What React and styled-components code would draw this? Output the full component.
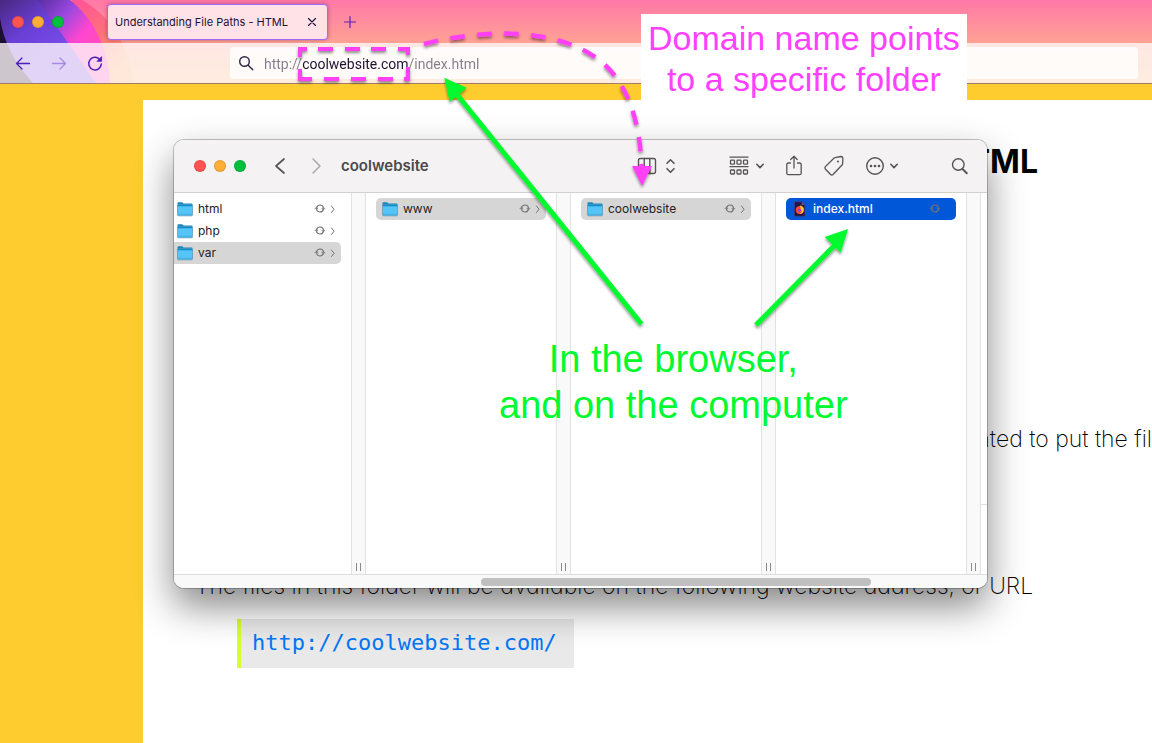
import React from "react";
import styled, { createGlobalStyle } from "styled-components";

const ui = `Inter, Roboto, "Liberation Sans", sans-serif`;

const GlobalStyle = createGlobalStyle`
  *, *::before, *::after { box-sizing: border-box; }
  body { margin: 0; font-family: ${ui}; }
  button { margin: 0; padding: 0; border: 0; background: none; color: inherit; font: inherit; cursor: pointer; }
  h1, p, ul { margin: 0; padding: 0; }
  ul { list-style: none; }
  svg { display: block; flex: none; }
`;

const Desktop = styled.div`
  position: relative;
  display: flex;
  flex-direction: column;
  min-height: 100vh;
  overflow: hidden;
  background: #ffcc2f;
`;

/* Browser chrome */

const Chrome = styled.header`
  position: relative;
  background: linear-gradient(#ff78a7, #ffa294 52%, #ffb880);
  border-bottom: 1px solid #a17c6c;
`;

const ThemeArt = styled.svg`
  position: absolute;
  left: 0;
  top: 0;
`;

const TabStrip = styled.div`
  position: relative;
  display: flex;
  align-items: center;
  height: 43px;
  padding-left: 12px;
`;

const Lights = styled.div`
  display: flex;
  gap: 8px;
`;

const Light = styled.button`
  width: 12px;
  height: 12px;
  border-radius: 50%;
  background: ${(p) => p.$color};
  box-shadow: inset 0 0 0 1px rgba(0, 0, 0, 0.12);
`;

const Tab = styled.div`
  display: flex;
  align-items: center;
  justify-content: space-between;
  width: 221px;
  height: 36px;
  margin-left: 43px;
  padding: 0 10px 0 7px;
  border: 1px solid #a268f6;
  border-radius: 4px;
  background: #ffe2e8;
  color: #1d1133;
  font-size: 11px;
  line-height: 16px;
  white-space: nowrap;
  box-shadow: 0 0 4px rgba(90, 30, 90, 0.45);
`;

const NewTab = styled.button`
  margin-left: 15px;
`;

const NavBar = styled.div`
  position: relative;
  display: flex;
  align-items: center;
  height: 40px;
  padding: 0 14px 0 14px;
  background: rgba(255, 251, 250, 0.78);
`;

const NavButtons = styled.div`
  display: flex;
  gap: 18px;
`;

const AddressBar = styled.label`
  flex: 1;
  display: flex;
  align-items: center;
  gap: 10px;
  height: 32px;
  margin-left: 126px;
  padding-left: 8px;
  border-radius: 4px;
  background: rgba(255, 255, 255, 0.8);
`;

/* The host name is darker than the rest of the address. */
const AddressInput = styled.input`
  flex: 1;
  min-width: 0;
  height: 24px;
  padding: 2px 0 0;
  border: 0;
  outline: 0;
  font-family: Roboto, ${ui};
  font-size: 14px;
  color: #837c8c;
  -webkit-text-fill-color: transparent;
  background: linear-gradient(90deg, #837c8c 38px, #1d1133 38px, #1d1133 144px, #837c8c 144px);
  -webkit-background-clip: text;
  background-clip: text;
`;

/* Web page behind the file window */

const Article = styled.main`
  flex: 1;
  margin: 16px 0 0 143px;
  padding: 38px 0 75px 52px;
  background: #fff;
  color: #000;
`;

const Title = styled.h1`
  padding-right: 114px;
  text-align: right;
  font-size: 32px;
  line-height: 48px;
  font-weight: 700;
`;

const Text = styled.p`
  margin-top: ${(p) => p.$before}px;
  font-size: 23px;
  line-height: 36px;
  font-weight: 200;
  font-feature-settings: "cv11";
  text-align: ${(p) => (p.$toEdge ? "right" : "left")};
  white-space: nowrap;
`;

const CodeBlock = styled.pre`
  width: fit-content;
  margin: 15px 0 0 42px;
  padding: 8px 17px 9px 11px;
  border-left: 4px solid #d7ff2f;
  background: #e9e9e9;
  font-family: "DejaVu Sans Mono", monospace;
  font-size: 22px;
  line-height: 32px;

  a { color: #0076f5; text-decoration: none; }
`;

/* File manager window */

const Finder = styled.section`
  position: absolute;
  left: 174px;
  top: 140px;
  display: flex;
  flex-direction: column;
  width: 813px;
  border-radius: 10px;
  overflow: hidden;
  background: #fff;
  color: #262626;
`;

const FinderShadow = styled.div`
  position: absolute;
  left: 174px;
  top: 140px;
  width: 813px;
  height: 448px;
  border-radius: 10px;
  box-shadow: 0 0 0 1px rgba(0, 0, 0, 0.22), 0 18px 38px rgba(0, 0, 0, 0.48);
`;

const Toolbar = styled.div`
  display: flex;
  align-items: center;
  height: 53px;
  padding: 0 18px 0 20px;
  border-bottom: 1px solid #d2d0d1;
  background: #f4f2f3;
  color: #565556;
`;

const History = styled.div`
  display: flex;
  gap: 16px;
  margin: 0 15px 0 24px;
`;

const FolderTitle = styled.strong`
  color: #4a494a;
  font-size: 15px;
  line-height: 20px;
  font-weight: 600;
`;

const Tools = styled.div`
  display: flex;
  align-items: center;
  gap: 20px;
  margin-left: auto;
`;

const Tool = styled.button`
  display: flex;
  align-items: center;
  justify-content: space-between;
  width: ${(p) => p.$width}px;
  margin-left: ${(p) => (p.$apart ? 32 : 0)}px;
`;

const Columns = styled.div`
  display: flex;
  height: 381px;
`;

const Column = styled.ul`
  width: ${(p) => (p.$first ? 177 : 190)}px;
  padding: ${(p) => (p.$first ? "5px 10px 0 0" : "5px 10px 0 10px")};
`;

const Row = styled.button`
  display: flex;
  align-items: center;
  width: 100%;
  height: 22px;
  padding: 0 5px 0 ${(p) => (p.$first ? 3 : 6)}px;
  border-radius: ${(p) => (p.$first ? "0 5px 5px 0" : "5px")};
  background: ${(p) => (p.$state === "active" ? "#0058d8" : p.$state === "open" ? "#d6d6d6" : "none")};
  color: ${(p) => (p.$state === "active" ? "#fff" : "#222")};
  font-size: 12px;
  font-weight: ${(p) => (p.$state === "active" ? 500 : 400)};
  text-align: left;
`;

const RowName = styled.span`
  flex: 1;
  margin-left: 5px;
  line-height: 16px;
`;

const RowMarks = styled.span`
  display: flex;
  align-items: center;
  gap: 4px;
  color: #747474;
`;

const Divider = styled.div`
  display: flex;
  align-items: flex-end;
  justify-content: center;
  gap: 3px;
  width: 15px;
  padding-bottom: 3px;
  border: solid #e2e2e2;
  border-width: 0 1px;
  background: #f9f9f9;

  &::before, &::after {
    content: "";
    width: 1px;
    height: 8px;
    background: #8a8a8a;
  }
`;

const Preview = styled.div`
  flex: 1;
  height: 312px;
  border-bottom: 1px solid #e2e2e2;
`;

const ScrollTrack = styled.div`
  height: 14px;
  padding: 3px 116px 3px 307px;
  border-top: 1px solid #dedede;
  background: #f9f9f9;
`;

const ScrollThumb = styled.div`
  height: 8px;
  border-radius: 4px;
  background: #c0c0c0;
`;

/* Annotations drawn over the windows */

const Marks = styled.svg`
  position: absolute;
  left: 0;
  top: 0;
  pointer-events: none;
`;

const Note = styled.p`
  position: absolute;
  left: ${(p) => p.$left}px;
  top: ${(p) => p.$top}px;
  padding: ${(p) => p.$pad || 0};
  background: ${(p) => p.$fill || "none"};
  color: ${(p) => p.$color};
  font-family: "Liberation Sans", Arial, sans-serif;
  font-size: ${(p) => p.$size}px;
  line-height: ${(p) => p.$line}px;
  text-align: center;
  white-space: nowrap;
`;

const Stroke = ({ w = 20, h = 20, sw = 1.5, color = "currentColor", children, ...rest }) => (
  <svg width={w} height={h} viewBox={`0 0 ${w} ${h}`} fill="none" stroke={color} strokeWidth={sw}
    strokeLinecap="round" strokeLinejoin="round" aria-hidden="true" {...rest}>
    {children}
  </svg>
);

const WindowLights = () => (
  <Lights>
    <Light $color="#ff5450" aria-label="Close" />
    <Light $color="#ffaf35" aria-label="Minimize" />
    <Light $color="#00bf3d" aria-label="Zoom" />
  </Lights>
);

const FolderIcon = () => (
  <svg width="16" height="16" viewBox="0 0 16 16" aria-hidden="true">
    <path d="M.5 3.2V2q0-.8.8-.8h4l1.2 1.2h8q1 0 1 1V5H.5z" fill="#1b86bd" />
    <rect x=".5" y="3.8" width="15" height="11" rx="1" fill="#55c4f6" stroke="#5792b0" strokeWidth=".7" />
    <path d="M.9 3.9h14.2v1.4H.9z" fill="#0d8dcc" />
    <path d="M1 13.3h14" stroke="#41b0e6" />
  </svg>
);

const FileIcon = () => (
  <svg width="16" height="16" viewBox="0 0 16 16" aria-hidden="true">
    <path d="M2.5.8h7.2l3.1 3.1v11.3H2.5z" fill="#241447" stroke="#5a3b70" strokeWidth=".6" />
    <path d="M9.7.8v3.1h3.1z" fill="#7b4b86" />
    <circle cx="7.8" cy="9" r="4" fill="#ff4a35" />
    <path d="M8.5 4.3c2.5 1 3.6 2.8 3.3 5.2-.4 2.3-2.3 3.6-4.3 3.4 2.2-.8 2.7-2.8 1.6-4.4-.8-1.1-1-2.4-.6-4.2z" fill="#ffc53a" />
    <circle cx="7.2" cy="9.2" r="1.5" fill="#8b46d9" />
  </svg>
);

const SyncIcon = () => (
  <Stroke w={12} h={12} sw={1.1}>
    <path d="M2.700 4.500A3.500 3.500 0 0 1 9.500 5M9.300 6.500A3.500 3.500 0 0 1 2.500 6" />
    <path d="M.900 5.800h3.200L2.500 4zM7.900 5.200h3.200L9.500 7z" fill="currentColor" strokeWidth=".3" />
  </Stroke>
);

const SmallChevron = () => (
  <Stroke w={6} h={12} sw={1}><path d="M1.500 3l2.500 3.300L1.500 9.500" /></Stroke>
);

const DownChevron = () => (
  <Stroke w={10} h={10} sw={1.6}><path d="M1.800 3.300L5 6.600l3.200-3.300" /></Stroke>
);

const Entry = ({ name, first, state }) => (
  <li>
    <Row $first={first} $state={state}>
      {state === "active" ? <FileIcon /> : <FolderIcon />}
      <RowName>{name}</RowName>
      <RowMarks>
        <SyncIcon />
        {state === "active" ? <Stroke w={6} h={12} /> : <SmallChevron />}
      </RowMarks>
    </Row>
  </li>
);

const BrowserChrome = () => (
  <Chrome>
    <ThemeArt width="160" height="83" viewBox="0 0 160 83" aria-hidden="true">
      <defs>
        <linearGradient id="outer" gradientUnits="userSpaceOnUse" x1="80" y1="0" x2="130" y2="60">
          <stop offset="0" stopColor="#ff4f92" /><stop offset=".5" stopColor="#ff6a74" /><stop offset="1" stopColor="#ffa060" />
        </linearGradient>
        <linearGradient id="band" gradientUnits="userSpaceOnUse" x1="40" y1="0" x2="88" y2="42">
          <stop offset="0" stopColor="#5b2fa6" /><stop offset=".45" stopColor="#9b48df" />
          <stop offset=".85" stopColor="#ff46d0" /><stop offset="1" stopColor="#ff4ac4" />
        </linearGradient>
        <linearGradient id="core" gradientUnits="userSpaceOnUse" x1="5" y1="0" x2="50" y2="60">
          <stop offset="0" stopColor="#4a2a86" /><stop offset=".5" stopColor="#6a3fd6" /><stop offset="1" stopColor="#7a4cec" />
        </linearGradient>
      </defs>
      <path d="M72 0h10c32 18 48 50 51 83H95z" fill="url(#outer)" opacity=".85" />
      <path d="M0 0h70c22 17 38 46 40 83H0z" fill="url(#band)" />
      <path d="M0 0h38l58 83H0z" fill="url(#core)" />
      <path d="M0 18c3 22 14 45 33 65H0z" fill="#1c1030" />
    </ThemeArt>
    <TabStrip>
      <WindowLights />
      <Tab>
        <span>Understanding File Paths - HTML</span>
        <button aria-label="Close tab">
          <Stroke w={10} h={10} sw={1.1} color="#1d1133"><path d="M1.500 1.500l7 7M8.500 1.500l-7 7" /></Stroke>
        </button>
      </Tab>
      <NewTab aria-label="New tab">
        <Stroke w={14} h={14} sw={1.2} color="#5a1fb4"><path d="M7 1.500v11M1.500 7h11" /></Stroke>
      </NewTab>
    </TabStrip>
    <NavBar>
      <NavButtons>
        <button aria-label="Back">
          <Stroke w={18} h={18} sw={1.3} color="#4a1fb8"><path d="M15.500 9.500H2.500M8 4L2.500 9.500 8 15" /></Stroke>
        </button>
        <button aria-label="Forward">
          <Stroke w={18} h={18} sw={1.3} color="#a88ae0"><path d="M2.500 9.500h13M10 4l5.500 5.500L10 15" /></Stroke>
        </button>
        <button aria-label="Reload">
          <Stroke w={18} h={18} sw={1.5} color="#4a1fb8">
            <path d="M13.500 5.200A6.300 6.300 0 1 0 15.300 10" />
            <path d="M15.600 3V7.300H11.300z" fill="#4a1fb8" strokeWidth=".8" />
          </Stroke>
        </button>
      </NavButtons>
      <AddressBar>
        <Stroke w={16} h={16} sw={1.4} color="#2f2443"><circle cx="6.500" cy="6.500" r="4.800" /><path d="M10.200 10.200l4.600 4.600" /></Stroke>
        <AddressInput aria-label="Address" defaultValue="http://coolwebsite.com/index.html" />
      </AddressBar>
    </NavBar>
  </Chrome>
);

const FinderWindow = () => (
  <Finder>
    <Toolbar>
      <WindowLights />
      <History>
        <button aria-label="Back"><Stroke sw={1.7}><path d="M14 3L6 10l8 7" /></Stroke></button>
        <button aria-label="Forward"><Stroke sw={1.500} color="#a9a8a9"><path d="M7 3l7 7-7 7" /></Stroke></button>
      </History>
      <FolderTitle>coolwebsite</FolderTitle>
      <Tools>
        <Tool $width={40} aria-label="View as columns">
          <Stroke w={20} sw={1.4}>
            <rect x="1.500" y="2.500" width="17" height="15" rx="2" /><path d="M7.200 2.500v15M12.800 2.500v15" />
          </Stroke>
          <Stroke w={12} h={18} sw={1.6}><path d="M2 6.300L5.500 2.800 9 6.300M2 11.700l3.500 3.500L9 11.700" /></Stroke>
        </Tool>
        <Tool $width={36} $apart aria-label="Group items">
          <Stroke w={20} sw={1.300}>
            <path d="M1 1.200h18M1 10.700h18" />
            {[1.500, 8, 14.500].map((x) => (
              <g key={x}><rect x={x} y="4.200" width="4" height="4" rx=".8" /><rect x={x} y="14" width="4" height="4" rx=".8" /></g>
            ))}
          </Stroke>
          <DownChevron />
        </Tool>
        <Tool $width={18} aria-label="Share">
          <Stroke w={18} h={22} sw={1.300}>
            <path d="M5.500 8H3.300Q1.800 8 1.800 9.500v8.700q0 1.500 1.500 1.500h11.400q1.500 0 1.500-1.500V9.500Q16.200 8 14.700 8h-2.200M9 13V1.500M5.800 4.500L9 1.300l3.200 3.200" />
          </Stroke>
        </Tool>
        <Tool $width={22} aria-label="Edit tags">
          <Stroke w={22} h={22} sw={1.300}>
            <path d="M12 2.600L18 1.500Q19.600 1.500 19.900 3.200L19.600 8.600Q19.500 9.600 18.800 10.300L10 19.500Q8.800 20.700 7.600 19.500L2.300 14Q1.300 12.800 2.400 11.600L10.600 3.500Q11.200 2.900 12 2.600z" />
            <circle cx="15" cy="6.500" r="1" fill="currentColor" stroke="none" />
          </Stroke>
        </Tool>
        <Tool $width={34} aria-label="More actions">
          <Stroke w={20} sw={1.400}>
            <circle cx="10" cy="10" r="8.300" />
            <g fill="currentColor" stroke="none"><circle cx="6" cy="10" r="1.300" /><circle cx="10" cy="10" r="1.300" /><circle cx="14" cy="10" r="1.300" /></g>
          </Stroke>
          <DownChevron />
        </Tool>
        <Tool $width={18} $apart aria-label="Search">
          <Stroke w={18} h={18} sw={1.400}><circle cx="7.300" cy="7.500" r="5.800" /><path d="M11.500 12l4.300 4.300" strokeWidth="2" /></Stroke>
        </Tool>
      </Tools>
    </Toolbar>
    <Columns>
      <Column $first>
        <Entry first name="html" />
        <Entry first name="php" />
        <Entry first name="var" state="open" />
      </Column>
      <Divider />
      <Column><Entry name="www" state="open" /></Column>
      <Divider />
      <Column><Entry name="coolwebsite" state="open" /></Column>
      <Divider />
      <Column><Entry name="index.html" state="active" /></Column>
      <Divider />
      <Preview />
    </Columns>
    <ScrollTrack><ScrollThumb /></ScrollTrack>
  </Finder>
);

const Annotations = () => (
  <>
    <Note $left={641} $top={14} $pad="4px 7px 0" $fill="#fff" $color="#ff40ff" $size={34} $line={41}>
      Domain name points<br />to a specific folder
    </Note>
    <Note $left={499} $top={336} $color="#00fa2f" $size={38} $line={46}>
      In the browser,<br />and on the computer
    </Note>
    <Marks width="900" height="340" viewBox="0 0 900 340" aria-hidden="true">
      <defs>
        <filter id="soft" x="-10%" y="-10%" width="120%" height="120%">
          <feDropShadow dx="0" dy="2" stdDeviation="1.500" floodColor="#000" floodOpacity=".45" />
        </filter>
      </defs>
      <g filter="url(#soft)" fill="none" strokeWidth="4" stroke="#ff40f6">
        <path d="M298 49h9M318 49h15M345 49h15M371 49h15M398 49h12M300 47v10M300 69v12M408 47v8M408 67v14M298 79h14M324 79h15M351 79h15M378 79h15M404 79h6" />
        <path d="M424 44C450 37 480 33.500 505 33.500C545 34 580 43 604 64C630 88 640 125 641.500 166" strokeDasharray="14.500 12.500" strokeWidth="4.500" />
        <path d="M632 166h20l-10 20z" fill="#ff40f6" stroke="none" />
      </g>
      <g filter="url(#soft)" stroke="#00fa2f" fill="#00fa2f" strokeWidth="5">
        <path d="M641.500 324L455 92M756 325l80-81" />
        <path d="M444.300 77.700L466.700 87.700 449.700 101.700zM848 229L824.700 237 840.700 252.700z" stroke="none" />
      </g>
    </Marks>
  </>
);

export default function App() {
  return (
    <Desktop>
      <GlobalStyle />
      <BrowserChrome />
      <Article>
        <Title>HTML</Title>
        <Text $before={235} $toEdge>wanted to put the fil</Text>
        <Text $before={111}>The files in this folder will be available on the following website address, or URL</Text>
        <CodeBlock><a href="http://coolwebsite.com/">http://coolwebsite.com/</a></CodeBlock>
      </Article>
      <FinderShadow />
      <FinderWindow />
      <Annotations />
    </Desktop>
  );
}
